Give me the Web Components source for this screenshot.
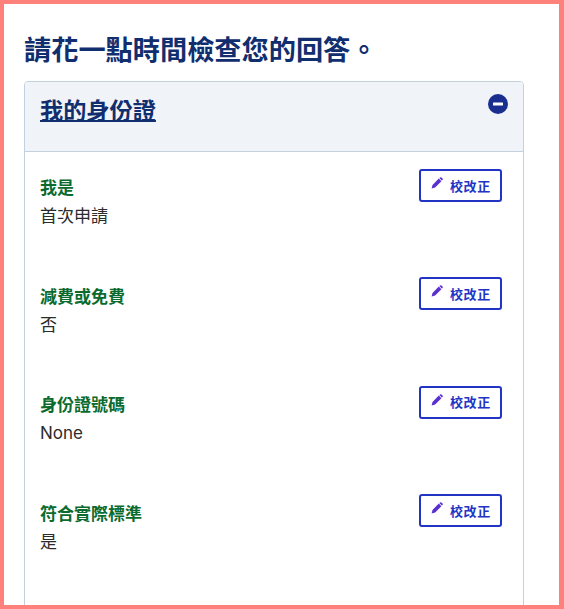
<!DOCTYPE html>
<html lang="zh-Hant">
<head>
<meta charset="utf-8">
<title>檢查您的回答</title>
<style>
  html, body { margin: 0; padding: 0; background: #fff; }
  body { font-family: Inter, "Noto Sans CJK TC", sans-serif; }
</style>
</head>
<body>
<review-page>
  <review-card title="我的身份證">
    <review-row label="我是">首次申請</review-row>
    <review-row label="減費或免費">否</review-row>
    <review-row label="身份證號碼">None</review-row>
    <review-row label="符合實際標準">是</review-row>
  </review-card>
</review-page>

<script>
class ReviewPage extends HTMLElement {
  constructor() {
    super();
    this.attachShadow({ mode: "open" }).innerHTML = `
      <style>
        :host { display: block; box-sizing: border-box; width: 564px; height: 609px; overflow: hidden;
          border: solid #ff817b; border-width: 4px 5px 4px 4px; padding: 0 35px 0 20px; background: #fff; }
        h1 { margin: 0; padding-top: 28px; height: 49px; font-size: 27.2px; line-height: 38px; font-weight: 700;
          color: #112e6f; white-space: nowrap; }
      </style>
      <h1>請花一點時間檢查您的回答。</h1>
      <slot></slot>`;
  }
}

class ReviewCard extends HTMLElement {
  constructor() {
    super();
    this.attachShadow({ mode: "open" }).innerHTML = `
      <style>
        :host { display: block; box-sizing: border-box; width: 500px; height: 600px;
          border: 1px solid #c3d0de; border-radius: 4px 4px 0 0; }
        header { display: flex; justify-content: space-between; box-sizing: border-box; height: 70px;
          padding: 12px 15px 0 15px; background: #f0f3f8; border-bottom: 1px solid #c3d0de;
          border-radius: 3px 3px 0 0; }
        a { margin-top: -1px; height: 36px; font-size: 23.2px; line-height: 36px; font-weight: 700; color: #112e6f;
          text-decoration: underline; text-decoration-thickness: 2px; text-underline-offset: 1px; }
        svg { display: block; margin-top: 0; width: 20px; height: 20px; }
        main { padding-top: 17px; }
      </style>
      <header>
        <a href="#" id="t"></a>
        <svg viewBox="0 0 20 20"><circle cx="10" cy="10" r="10" fill="#1a2e8f"/><rect x="5" y="8.4" width="10" height="3.2" rx=".6" fill="#fff"/></svg>
      </header>
      <main><slot></slot></main>`;
    this.shadowRoot.getElementById("t").textContent = this.getAttribute("title");
  }
}

class ReviewRow extends HTMLElement {
  constructor() {
    super();
    this.attachShadow({ mode: "open" }).innerHTML = `
      <style>
        :host { display: flex; justify-content: space-between; align-items: flex-start; box-sizing: border-box;
          height: 108.4px; padding: 0 21px 0 15px; }
        .label { margin-top: 7.4px; font-size: 17px; line-height: 24px; font-weight: 700; color: #0b6b2e; }
        .value { margin-top: 4px; font-size: 17px; line-height: 24px; color: #2b2b2b; }
        button { display: flex; align-items: center; box-sizing: border-box; width: 83px; height: 33px; margin: 0;
          padding: 0 0 0 10px; background: #fff; border: 2px solid #2234c4; border-radius: 3px;
          font: 700 13px/20px Inter, "Noto Sans CJK TC", sans-serif; letter-spacing: .6px; color: #2234c4; }
        svg { width: 12px; height: 12px; margin: -5px 7px 0 0; flex: none; }
      </style>
      <div>
        <div class="label" id="l"></div>
        <div class="value"><slot></slot></div>
      </div>
      <button type="button">
        <svg viewBox="0 0 12 12"><path fill="#5a2fd0" d="M7.8 1.6 10.4 4.2 4.1 10.5 .6 11.4 1.5 7.9Z"/><path fill="#5a2fd0" d="M9 .5a1 1 0 0 1 1.4 0l1.1 1.1a1 1 0 0 1 0 1.4l-.6.6L8.4 1.1Z"/></svg>
        校改正
      </button>`;
    this.shadowRoot.getElementById("l").textContent = this.getAttribute("label");
  }
}

customElements.define("review-page", ReviewPage);
customElements.define("review-card", ReviewCard);
customElements.define("review-row", ReviewRow);
</script>
</body>
</html>
